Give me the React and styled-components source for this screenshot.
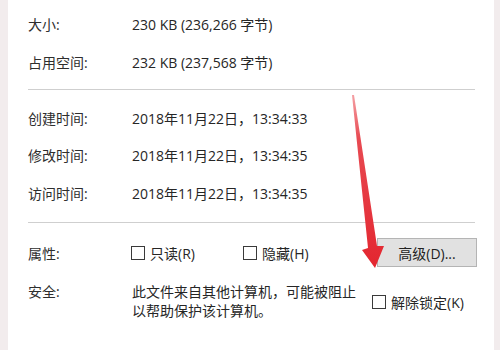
import React from "react";
import styled, { createGlobalStyle } from "styled-components";

const Global = createGlobalStyle`
  html, body { margin: 0; padding: 0; }
  body {
    width: 500px;
    height: 350px;
    overflow: hidden;
    background: #f2eced;
    font-family: "Open Sans", "Noto Sans CJK SC", sans-serif;
    color: #262626;
  }
`;

const Frame = styled.div`
  position: relative;
  display: flex;
  height: 350px;
  padding: 0 6px 0 8px;
`;

const Panel = styled.div`
  flex: 1;
  background: #ffffff;
  padding: 5px 19px 0 20px;
  display: flex;
  flex-direction: column;
  font-size: 14px;
`;

const Row = styled.div`
  display: grid;
  grid-template-columns: 104px 1fr;
  align-items: center;
  height: ${(p) => p.$h}px;
  white-space: nowrap;
`;

const Label = styled.span`
  color: #2e2e2e;
`;

const Value = styled.span`
  color: #262626;
`;

const Divider = styled.div`
  height: 1px;
  background: #cfcfcf;
  margin: ${(p) => p.$m};
`;

const AttrRow = styled.div`
  display: grid;
  grid-template-columns: 103px 112px 134px 100px;
  align-items: center;
  height: 30px;
  margin-top: 15px;
  margin-right: -2px;
  white-space: nowrap;
`;

const Check = styled.label`
  display: flex;
  align-items: center;
  gap: 5px;
  color: #262626;
`;

const Box = styled.span`
  width: 12px;
  height: 12px;
  border: 1px solid #3a3a3a;
  background: #fff;
  flex: none;
`;

const Button = styled.div`
  height: 27px;
  border: 1px solid #b4b4b4;
  background: #e1e1e1;
  display: flex;
  align-items: center;
  justify-content: center;
  color: #222;
`;

const SecRow = styled.div`
  display: grid;
  grid-template-columns: 104px 240px 1fr;
  margin-top: 14px;
  white-space: nowrap;
`;

const SecLabel = styled.span`
  line-height: 19px;
  color: #2e2e2e;
`;

const SecText = styled.div`
  line-height: 19px;
  color: #262626;
`;

const SecCheck = styled(Check)`
  align-self: center;
  padding-top: 2px;
`;

const ArrowSvg = styled.svg`
  position: absolute;
  left: 0;
  top: 0;
  pointer-events: none;
`;

export default function App() {
  return (
    <>
      <Global />
      <Frame>
        <Panel>
          <Row $h={38}>
            <Label>大小:</Label>
            <Value>230 KB (236,266 字节)</Value>
          </Row>
          <Row $h={38}>
            <Label>占用空间:</Label>
            <Value>232 KB (237,568 字节)</Value>
          </Row>
          <Divider $m="8px 0 9px" />
          <Row $h={37.5}>
            <Label>创建时间:</Label>
            <Value>2018年11月22日，13:34:33</Value>
          </Row>
          <Row $h={37.5}>
            <Label>修改时间:</Label>
            <Value>2018年11月22日，13:34:35</Value>
          </Row>
          <Row $h={37.5}>
            <Label>访问时间:</Label>
            <Value>2018年11月22日，13:34:35</Value>
          </Row>
          <Divider $m="10px 0 0" />
          <AttrRow>
            <Label>属性:</Label>
            <Check>
              <Box />
              只读(R)
            </Check>
            <Check>
              <Box />
              隐藏(H)
            </Check>
            <Button>高级(D)...</Button>
          </AttrRow>
          <SecRow>
            <SecLabel>安全:</SecLabel>
            <SecText>
              此文件来自其他计算机，可能被阻止
              <br />
              以帮助保护该计算机。
            </SecText>
            <SecCheck>
              <Box />
              解除锁定(K)
            </SecCheck>
          </SecRow>
        </Panel>
        <ArrowSvg width="500" height="350" viewBox="0 0 500 350">
          <defs>
            <linearGradient id="ag" x1="0" y1="0" x2="0" y2="1">
              <stop offset="0" stopColor="#f4a0a4" />
              <stop offset="0.25" stopColor="#e84a52" />
              <stop offset="1" stopColor="#e3262f" />
            </linearGradient>
          </defs>
          <polygon
            points="352,95 354,95 377,246 384,246 375,268 362,250 368,248"
            fill="url(#ag)"
          />
        </ArrowSvg>
      </Frame>
    </>
  );
}
